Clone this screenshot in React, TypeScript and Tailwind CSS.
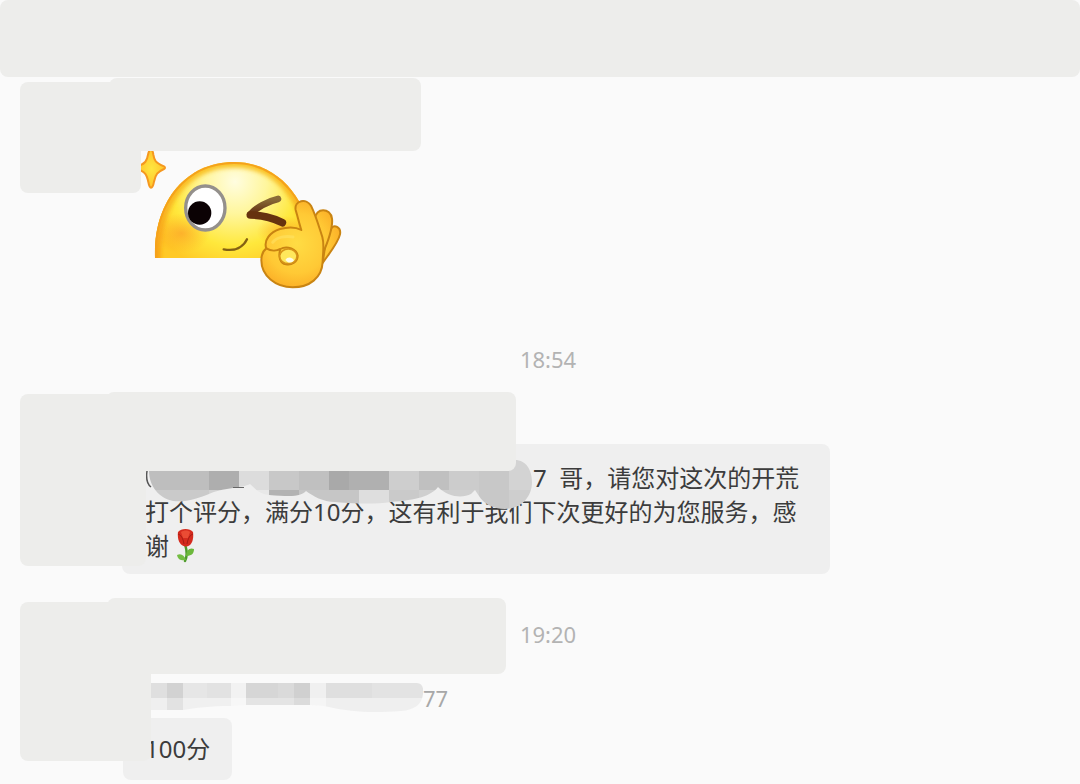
import type { ReactNode } from 'react';

interface Tile {
  x: number;
  y: number;
  w: number;
  h: number;
  fill: string;
}

const MENTION_TILES: Tile[] = [
  { x: 4, y: 0, w: 60, h: 30, fill: '#bebebe' },
  { x: 64, y: 0, w: 30, h: 30, fill: '#aeaeae' },
  { x: 94, y: 0, w: 30, h: 30, fill: '#dcdcdc' },
  { x: 124, y: 0, w: 30, h: 30, fill: '#c8c8c8' },
  { x: 154, y: 0, w: 30, h: 30, fill: '#c0c0c0' },
  { x: 184, y: 0, w: 20, h: 30, fill: '#a9a9a9' },
  { x: 204, y: 0, w: 40, h: 30, fill: '#b0b0b0' },
  { x: 244, y: 0, w: 30, h: 30, fill: '#cecece' },
  { x: 274, y: 0, w: 30, h: 30, fill: '#c0c0c0' },
  { x: 304, y: 0, w: 30, h: 30, fill: '#cccccc' },
  { x: 334, y: 0, w: 30, h: 30, fill: '#c8c8c8' },
  { x: 364, y: 0, w: 26, h: 30, fill: '#d3d3d3' },
  { x: 4, y: 30, w: 60, h: 22, fill: '#cacaca' },
  { x: 64, y: 30, w: 30, h: 22, fill: '#d2d2d2' },
  { x: 94, y: 30, w: 30, h: 22, fill: '#e8e8e8' },
  { x: 124, y: 30, w: 30, h: 6, fill: '#b3b3b3' },
  { x: 124, y: 36, w: 30, h: 16, fill: '#d6d6d6' },
  { x: 154, y: 30, w: 60, h: 22, fill: '#c6c6c6' },
  { x: 214, y: 30, w: 30, h: 22, fill: '#dedede' },
  { x: 244, y: 30, w: 30, h: 22, fill: '#cacaca' },
  { x: 274, y: 30, w: 60, h: 22, fill: '#cfcfcf' },
  { x: 334, y: 30, w: 30, h: 22, fill: '#c8c8c8' },
  { x: 364, y: 30, w: 26, h: 22, fill: '#cecece' },
];

const NAME_TILES: Tile[] = [
  { x: 0, y: 0, w: 16, h: 16, fill: '#dfdfdf' },
  { x: 16, y: 0, w: 16, h: 16, fill: '#d2d2d2' },
  { x: 32, y: 0, w: 24, h: 16, fill: '#e6e6e6' },
  { x: 56, y: 0, w: 24, h: 16, fill: '#e2e2e2' },
  { x: 80, y: 0, w: 15, h: 16, fill: '#f2f2f2' },
  { x: 95, y: 0, w: 32, h: 16, fill: '#d6d6d6' },
  { x: 127, y: 0, w: 16, h: 16, fill: '#dadada' },
  { x: 143, y: 0, w: 16, h: 16, fill: '#d0d0d0' },
  { x: 159, y: 0, w: 16, h: 16, fill: '#f0f0f0' },
  { x: 175, y: 0, w: 46, h: 16, fill: '#dfdfdf' },
  { x: 221, y: 0, w: 53, h: 16, fill: '#e3e3e3' },
  { x: 0, y: 16, w: 16, h: 16, fill: '#efefef' },
  { x: 16, y: 16, w: 16, h: 16, fill: '#e2e2e2' },
  { x: 32, y: 16, w: 48, h: 16, fill: '#f0f0f0' },
  { x: 80, y: 16, w: 15, h: 16, fill: '#f7f7f7' },
  { x: 95, y: 16, w: 48, h: 16, fill: '#e4e4e4' },
  { x: 143, y: 16, w: 16, h: 16, fill: '#dbdbdb' },
  { x: 159, y: 16, w: 16, h: 16, fill: '#f5f5f5' },
  { x: 175, y: 16, w: 99, h: 16, fill: '#efefef' },
];

function Tiles({ tiles }: { tiles: Tile[] }) {
  return (
    <>
      {tiles.map((t, idx) => (
        <rect key={idx} x={t.x} y={t.y} width={t.w} height={t.h} fill={t.fill} shapeRendering="crispEdges" />
      ))}
    </>
  );
}

function MentionMosaic() {
  return (
    <svg className="absolute left-[23px] top-4 h-[52px] w-[390px]" viewBox="0 0 390 52" aria-hidden="true">
      <defs>
        <clipPath id="mention-shape">
          <path d="M4 0H370C381 0 387 10 387 22C387 37 376 49 360 49C348 49 338 43 334 36L330 30L326 34C318 38 304 38 293 27C286 36 272 40 246 42C228 45 200 43 190 42C178 42 168 36 161 31C156 36 150 37 124 35C112 33 110 28 105 24C98 28 76 28 64 34C46 41 38 42 28 41C14 38 4 26 4 11Z" />
        </clipPath>
      </defs>
      <g clipPath="url(#mention-shape)">
        <Tiles tiles={MENTION_TILES} />
      </g>
      <path d="M2 11C1 18 2 24 6 27" fill="none" stroke="#555" strokeWidth="1.5" />
      <path d="M88 27.500H99" stroke="#666" strokeWidth="1" />
    </svg>
  );
}

function NameMosaic() {
  return (
    <svg className="h-8 w-[272px] shrink-0" viewBox="0 0 272 32" aria-hidden="true">
      <defs>
        <clipPath id="name-shape">
          <path d="M0 1H266C271 1 273 6 272 12C271 22 264 28 250 29C220 31 200 30 178 25C170 23 165 24 159 23H95L80 24C60 24 44 26 32 28H0Z" />
        </clipPath>
      </defs>
      <g clipPath="url(#name-shape)">
        <Tiles tiles={NAME_TILES} />
      </g>
    </svg>
  );
}

function OkSticker() {
  return (
    <svg className="h-[150px] w-[210px]" viewBox="33 33 630 450" role="img" aria-label="OK">
      <defs>
        <radialGradient id="face" gradientUnits="userSpaceOnUse" cx="315" cy="125" r="275">
          <stop offset="0" stopColor="#fffde0" />
          <stop offset="0.350" stopColor="#fff69c" />
          <stop offset="0.700" stopColor="#ffe83c" />
          <stop offset="1" stopColor="#ffc926" />
        </radialGradient>
        <linearGradient id="rim" x1="0" y1="0" x2="0" y2="1">
          <stop offset="0" stopColor="#f9c62a" />
          <stop offset="1" stopColor="#f79f16" />
        </linearGradient>
        <radialGradient id="blush">
          <stop offset="0" stopColor="#fb8f24" stopOpacity="0.550" />
          <stop offset="1" stopColor="#fb9a1c" stopOpacity="0" />
        </radialGradient>
        <radialGradient id="hand" gradientUnits="userSpaceOnUse" cx="500" cy="310" r="150">
          <stop offset="0" stopColor="#ffdc44" />
          <stop offset="0.600" stopColor="#ffc935" />
          <stop offset="1" stopColor="#faa823" />
        </radialGradient>
        <linearGradient id="wink" x1="0" y1="0" x2="0" y2="1">
          <stop offset="0" stopColor="#8a6c38" />
          <stop offset="1" stopColor="#602c10" />
        </linearGradient>
        <radialGradient id="spark">
          <stop offset="0" stopColor="#ffe640" />
          <stop offset="1" stopColor="#ffc52c" />
        </radialGradient>
        <clipPath id="face-shape">
          <path d="M75 354C68 190 165 66 312 66C450 66 552 190 545 354Z" />
        </clipPath>
        <filter id="soft" x="-20%" y="-20%" width="140%" height="140%">
          <feGaussianBlur stdDeviation="6" />
        </filter>
      </defs>

      {/* 星光 */}
      <path
        d="M62 29C67 29 69 36 70 44C73 62 76 68 102 79C106 81 106 85 102 87C82 96 77 103 72 125C70 137 67 143 63 143C59 143 57 137 55 126C50 103 46 96 24 88V79C46 70 51 63 54 44C56 35 58 29 62 29Z"
        fill="url(#spark)"
        stroke="#f5981f"
        strokeWidth="6"
      />

      {/* 脸 */}
      <g clipPath="url(#face-shape)">
        <rect x="60" y="60" width="500" height="300" fill="url(#face)" />
        <path
          d="M75 370C68 190 165 66 312 66C450 66 552 190 545 370"
          fill="none"
          stroke="url(#rim)"
          strokeWidth="34"
          filter="url(#soft)"
        />
        <path d="M75 354C68 190 165 66 312 66C450 66 552 190 545 354" fill="none" stroke="#f5a21c" strokeWidth="12" />
        <ellipse cx="155" cy="280" rx="85" ry="60" fill="url(#blush)" />
        <ellipse cx="460" cy="275" rx="80" ry="48" fill="url(#blush)" />
      </g>

      <ellipse cx="226" cy="204" rx="59" ry="66" fill="#fff" stroke="#94908c" strokeWidth="10" />
      <circle cx="209" cy="219" r="35" fill="#0b0204" />

      <path d="M444 177C412 184 378 203 361 223" fill="none" stroke="url(#wink)" strokeWidth="20" strokeLinecap="round" />
      <path d="M361 225C390 225 430 234 457 248" fill="none" stroke="#66320f" strokeWidth="23" strokeLinecap="round" />
      <path d="M281 328C316 335 340 321 351 298" fill="none" stroke="#846113" strokeWidth="7" strokeLinecap="round" />

      {/* OK 手势 */}
      <g fill="url(#hand)" stroke="#c98412" strokeWidth="6" strokeLinejoin="round">
        <path d="M588 300L602 268C612 250 634 262 630 283C625 307 603 333 578 369Z" />
        <path d="M556 279L555 236C556 203 602 202 606 236C609 259 596 301 576 346Z" />
        <path d="M409 325C400 302 420 276 450 267C475 260 496 260 514 270C507 248 502 226 497 210C492 181 530 173 544 199C558 228 565 254 577 291C584 317 578 344 578 365C576 414 538 442 488 442C436 442 394 407 394 361C394 345 397 334 409 325Z" />
        <path d="M409 325C425 335 443 331 451 327C472 315 500 328 503 347C503 366 485 376 468 373C450 369 444 350 451 327" fill="none" />
      </g>
      <ellipse cx="475" cy="349" rx="26" ry="22" fill="#ffe75c" stroke="#d79419" strokeWidth="5" />
      <path d="M466 360C472 350 485 350 492 361C486 370 474 370 466 360Z" fill="#fdfbe9" />
      <path d="M428 307C440 292 467 286 489 291" fill="none" stroke="#ffe669" strokeWidth="9" strokeLinecap="round" opacity="0.500" />
    </svg>
  );
}

function Rose() {
  return (
    <svg className="ml-[7px] inline-block h-[34px] w-5 align-top" viewBox="0 0 20 34" role="img" aria-label="玫瑰">
      <path d="M9.500 17C11 22 11 28 9 32" fill="none" stroke="#4d9a2a" strokeWidth="2.500" strokeLinecap="round" />
      <path d="M10 27C10 21 14 18 18 20C18 25 15 27 10 27Z" fill="#6cb83c" />
      <path d="M10 31C8 26 5 24 1 26C2 31 6 32 10 31Z" fill="#74bd43" />
      <path d="M2 3C5 -1 14 -1 17 3C18 10 16 17 10 17.500C4 17 1 11 2 3Z" fill="#d52b1e" />
      <path d="M5 3C8 1 12 1 14 3L12 9H7Z" fill="#ea4c34" />
      <path d="M2 5C5 6 7 9 8 15M17 5C14 6 12 9 11 15" fill="none" stroke="#a31d13" strokeWidth="1" />
    </svg>
  );
}

function TimeStamp({ children }: { children: ReactNode }) {
  return <time className="block pl-4 text-center text-[22px] leading-6 text-[#b3b3b3]">{children}</time>;
}

export default function App() {
  return (
    <div className="min-h-screen overflow-hidden bg-[#fafafa] font-['Noto_Sans','Noto_Sans_CJK_SC',sans-serif] text-[#3c3c3c]">
      <header className="h-[77px] rounded-lg bg-[#ededeb]" />

      <main className="pt-px">
        {/* 表情消息 */}
        <article className="flex items-start pl-5">
          <div className="mt-1 h-[111px] w-[121px] shrink-0 rounded-lg bg-[#ededeb]" />
          <div className="min-w-0 flex-1">
            <div className="-ml-8 h-[73px] w-[312px] rounded-lg bg-[#ededeb]" />
            <OkSticker />
          </div>
        </article>

        <div className="mt-[46px]">
          <TimeStamp>18:54</TimeStamp>
        </div>

        {/* 评分邀请 */}
        <article className="mt-[21px] flex items-start pl-5">
          <div className="relative z-10 mt-0.5 h-[172px] w-[126px] shrink-0 rounded-lg bg-[#ededeb]" />
          <div className="min-w-0 flex-1">
            <div className="relative z-10 -ml-10 h-[79px] w-[410px] rounded-lg bg-[#ededeb]" />
            <div className="relative -ml-6 -mt-[27px] w-fit rounded-lg bg-[#efefef] pb-[11px] pl-[23px] pr-6 pt-[17px]">
              <p className="w-[661px] whitespace-nowrap text-2xl leading-[34px]">
                <span className="block pl-[388px]">7&nbsp; 哥，请您对这次的开荒</span>
                <span className="block">打个评分，满分10分，这有利于我们下次更好的为您服务，感</span>
                <span className="block">
                  谢
                  <Rose />
                </span>
              </p>
              <MentionMosaic />
            </div>
          </div>
        </article>

        <div className="mt-12">
          <TimeStamp>19:20</TimeStamp>
        </div>

        {/* 客户回复 */}
        <article className="-mt-12 flex items-start pl-5">
          <div className="relative z-10 mt-1 h-[159px] w-[131px] shrink-0 rounded-lg bg-[#ededeb]" />
          <div className="min-w-0 flex-1">
            <div className="-ml-11 h-[76px] w-[399px] rounded-lg bg-[#ededeb]" />
            <div className="flex h-11 items-center pt-1 text-[22px] text-[#a8a8a8]">
              <NameMosaic />
              <span>77</span>
            </div>
            <p className="-ml-7 w-fit rounded-lg bg-[#efefef] px-[22px] py-3.5 text-2xl leading-[34px]">100分</p>
          </div>
        </article>
      </main>
    </div>
  );
}
